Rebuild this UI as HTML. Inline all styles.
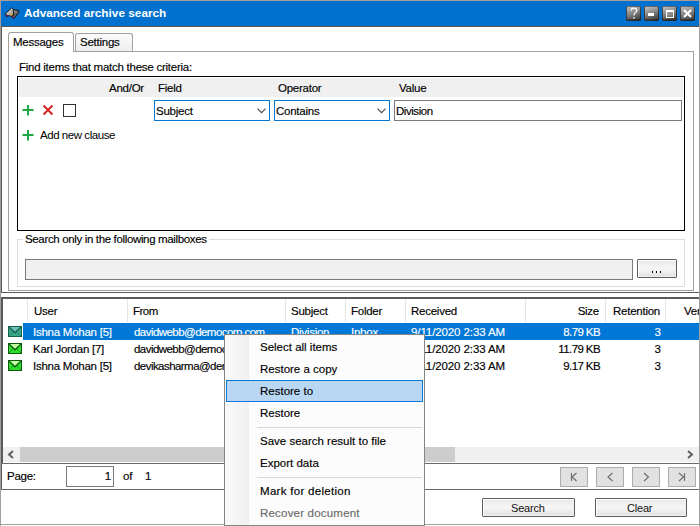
<!DOCTYPE html>
<html><head><meta charset="utf-8">
<style>
*{margin:0;padding:0;box-sizing:border-box}
html,body{width:700px;height:526px;overflow:hidden;background:#fff}
body{position:relative;font-family:"Liberation Sans",sans-serif;font-size:11px;color:#000}
.a{position:absolute}
.t{position:absolute;white-space:nowrap;line-height:11px;font-size:11.5px;letter-spacing:-0.25px;-webkit-text-stroke:0.15px currentColor}
.m{position:absolute;white-space:nowrap;line-height:12px;font-size:11.5px;-webkit-text-stroke:0.15px currentColor}
</style></head><body>
<!-- window frame -->
<div class="a" style="left:0;top:0;width:700px;height:526px;border:1px solid #a0a0a0;border-top-color:#a89c94;border-bottom:none"></div>
<!-- title bar -->
<div class="a" style="left:0;top:0;width:1px;height:27px;background:#a89c94"></div>
<div class="a" style="left:699px;top:0;width:1px;height:27px;background:#a89c94"></div>
<div class="a" style="left:1px;top:1px;width:698px;height:25px;background:#0071ce"></div>
<div class="a" style="left:1px;top:26px;width:698px;height:1px;background:#5e564f"></div>
<div class="t" style="left:24px;top:7px;font-weight:bold;font-size:11.8px;letter-spacing:0;-webkit-text-stroke:0;line-height:12px;color:#fff">Advanced archive search</div>
<!-- binoculars -->
<svg class="a" style="left:0;top:0" width="24" height="24" viewBox="0 0 24 24">
 <defs><linearGradient id="bg1" x1="0" y1="0" x2="1" y2="1"><stop offset="0" stop-color="#f0f0f0"/><stop offset="0.7" stop-color="#a8a8a8"/><stop offset="1" stop-color="#707070"/></linearGradient>
 <linearGradient id="bg2" x1="0" y1="0" x2="1" y2="1"><stop offset="0" stop-color="#b8b8b8"/><stop offset="0.5" stop-color="#6a6a6a"/><stop offset="1" stop-color="#202020"/></linearGradient></defs>
 <path d="M5 14.2 L11.6 8 L13.6 9.6 L13.8 15 L11.6 16.6 L9.4 15.6 L6.4 16.6 Z" fill="url(#bg1)" stroke="#1e1610" stroke-width="1"/>
 <path d="M13.2 9.8 L18.8 10.4 L18.6 12.6 L15.2 17 L13.6 18.6 L11.6 16.6 L13.8 15 Z" fill="url(#bg2)" stroke="#1e1610" stroke-width="1"/>
 <path d="M5.6 14.8 L8.6 16.2" stroke="#4a2a60" stroke-width="1.5"/>
 <path d="M11.2 16.4 L14 18" stroke="#4a2a60" stroke-width="1.5"/>
 <rect x="10" y="13.6" width="2.2" height="1.6" rx="0.6" fill="#f5a000"/>
</svg>
<!-- title buttons -->
<div class="a tb" style="left:626px;top:6px"></div>
<div class="a tb" style="left:644px;top:6px"></div>
<div class="a tb" style="left:662px;top:6px"></div>
<div class="a tb" style="left:680px;top:6px"></div>
<style>.tb{width:15px;height:15px;border-radius:2px;background:linear-gradient(160deg,#c8c8c8 0%,#999 35%,#5c5c5c 70%,#2e2e2e 100%);box-shadow:inset 0 0 0 1px rgba(30,30,30,.5),inset 0 -1px 0 1px rgba(20,20,20,.35)}</style>
<svg class="a" style="left:629px;top:7px" width="10" height="13"><path d="M2.2 3.6 Q2.2 1.2 5 1.2 Q7.8 1.2 7.8 3.6 Q7.8 5 6 6 Q5 6.6 5 8.6" stroke="#fff" stroke-width="1.25" fill="none"/><rect x="4.3" y="10" width="1.4" height="1.6" fill="#fff"/></svg>
<div class="a" style="left:648px;top:13px;width:6px;height:3px;background:#fff"></div>
<div class="a" style="left:666px;top:10px;width:8px;height:8px;border:1px solid #fff;border-top-width:2px;background:rgba(255,255,255,.15)"></div>
<svg class="a" style="left:683px;top:9px" width="9" height="9"><path d="M1 1L8 8M8 1L1 8" stroke="#fff" stroke-width="2.2"/></svg>

<!-- outer top frame -->
<div class="a" style="left:1px;top:27px;width:698px;height:266px;border-left:1px solid #5a5a5a;border-bottom:1px solid #5a5a5a"></div>
<!-- tab panel -->
<div class="a" style="left:8px;top:51px;width:686px;height:240px;border:1px solid #a0a0a0"></div>
<!-- tabs -->
<div class="a" style="left:75px;top:33px;width:58px;height:18px;border:1px solid #a0a0a0;border-bottom:none;border-radius:3px 3px 0 0;background:linear-gradient(#fbfbfb,#eeeeee)"></div>
<div class="a" style="left:8px;top:32px;width:66px;height:20px;border:1px solid #a0a0a0;border-bottom:none;border-radius:3px 3px 0 0;background:#fff"></div>
<div class="t" style="left:13px;top:37px">Messages</div>
<div class="t" style="left:80px;top:37px">Settings</div>

<div class="t" style="left:19px;top:62px">Find items that match these criteria:</div>
<!-- grid -->
<div class="a" style="left:17px;top:76px;width:668px;height:155px;border:1px solid #000"></div>
<div class="a" style="left:19px;top:78px;width:664px;height:19px;background:#f0f0f0"></div>
<div class="t" style="left:109px;top:83px">And/Or</div>
<div class="t" style="left:158px;top:83px">Field</div>
<div class="t" style="left:278px;top:83px">Operator</div>
<div class="t" style="left:399px;top:83px">Value</div>

<svg class="a" style="left:22px;top:105px" width="12" height="11"><rect x="5" y="0" width="2" height="10.5" fill="#1ea844"/><rect x="0.5" y="4" width="11" height="2" fill="#1ea844"/></svg>
<svg class="a" style="left:42px;top:104px" width="12" height="12"><path d="M1.5 1.5L10.5 10.5M10.5 1.5L1.5 10.5" stroke="#d42020" stroke-width="1.9"/></svg>
<div class="a" style="left:63px;top:104px;width:13px;height:13px;border:1px solid #333;background:#fff"></div>

<div class="a" style="left:154px;top:100px;width:116px;height:21px;border:1px solid #0078d7;background:#fff"></div>
<svg class="a" style="left:257px;top:108px" width="10" height="7"><path d="M0.5 0.6L4.5 4.6L8.5 0.6" stroke="#4a4a4a" stroke-width="1.1" fill="none"/></svg>
<div class="t" style="left:156px;top:106px">Subject</div>
<div class="a" style="left:274px;top:100px;width:116px;height:21px;border:1px solid #0078d7;background:#fff"></div>
<svg class="a" style="left:377px;top:108px" width="10" height="7"><path d="M0.5 0.6L4.5 4.6L8.5 0.6" stroke="#4a4a4a" stroke-width="1.1" fill="none"/></svg>
<div class="t" style="left:276px;top:106px">Contains</div>
<div class="a" style="left:394px;top:100px;width:288px;height:21px;border:1px solid #7a7a7a;background:#fff"></div>
<div class="t" style="left:396px;top:106px;letter-spacing:-0.45px">Division</div>

<svg class="a" style="left:22px;top:130px" width="12" height="11"><rect x="5" y="0" width="2" height="10.5" fill="#1ea844"/><rect x="0.5" y="4" width="11" height="2" fill="#1ea844"/></svg>
<div class="t" style="left:40px;top:130px;letter-spacing:-0.45px;-webkit-text-stroke:0;color:#000">Add new clause</div>

<!-- group box -->
<div class="a" style="left:17px;top:239px;width:668px;height:48px;border:1px solid #dcdcdc"></div>
<div class="a" style="left:23px;top:233px;width:186px;height:12px;background:#fff"></div>
<div class="t" style="left:25px;top:234px;letter-spacing:-0.35px">Search only in the following mailboxes</div>
<div class="a" style="left:25px;top:259px;width:608px;height:21px;border:1px solid #7a7a7a;background:#f0f0f0"></div>
<div class="a btn" style="left:637px;top:259px;width:40px;height:19px"></div>
<style>.btn{border:1px solid #5e5e5e;border-radius:1px;background:linear-gradient(#e6e6e6,#f6f6f6 45%,#f3f3f3 60%,#e0e0e0);box-shadow:inset 1px 1px 0 #fff,inset -1px -1px 0 #efefef}</style>
<div class="a" style="left:652px;top:271px;width:1px;height:2px;background:#000"></div>
<div class="a" style="left:656px;top:271px;width:1px;height:2px;background:#000"></div>
<div class="a" style="left:660px;top:271px;width:1px;height:2px;background:#000"></div>

<!-- list view -->
<div class="a" style="left:1px;top:297px;width:698px;height:2px;background:#5a5a5a"></div>
<div class="a" style="left:1px;top:297px;width:2px;height:166px;background:#5a5a5a"></div>
<div class="a" style="left:1px;top:463px;width:1px;height:27px;background:#5a5a5a"></div>
<!-- header -->
<div class="a" style="left:27px;top:299px;width:1px;height:23px;background:#e5e5e5"></div>
<div class="a" style="left:127px;top:299px;width:1px;height:23px;background:#e5e5e5"></div>
<div class="a" style="left:285px;top:299px;width:1px;height:23px;background:#e5e5e5"></div>
<div class="a" style="left:345px;top:299px;width:1px;height:23px;background:#e5e5e5"></div>
<div class="a" style="left:405px;top:299px;width:1px;height:23px;background:#e5e5e5"></div>
<div class="a" style="left:525px;top:299px;width:1px;height:23px;background:#e5e5e5"></div>
<div class="a" style="left:605px;top:299px;width:1px;height:23px;background:#e5e5e5"></div>
<div class="a" style="left:665px;top:299px;width:1px;height:23px;background:#e5e5e5"></div>
<div class="t" style="left:34px;top:306px">User</div>
<div class="t" style="left:133px;top:306px;letter-spacing:-0.5px">From</div>
<div class="t" style="left:291px;top:306px">Subject</div>
<div class="t" style="left:351px;top:306px">Folder</div>
<div class="t" style="left:411px;top:306px">Received</div>
<div class="t" style="left:540px;top:306px;width:59px;text-align:right">Size</div>
<div class="t" style="left:613px;top:306px">Retention</div>
<div class="t" style="left:684px;top:306px">Ver</div>

<!-- rows -->
<div class="a" style="left:23px;top:323px;width:676px;height:17px;background:#0078d7"></div>
<div class="t" style="left:33px;top:327px;color:#fff">Ishna Mohan [5]</div>
<div class="t" style="left:134px;top:327px;letter-spacing:-0.55px;color:#fff">davidwebb@democorp.com</div>
<div class="t" style="left:291px;top:327px;color:#fff">Division</div>
<div class="t" style="left:351px;top:327px;color:#fff">Inbox</div>
<div class="t" style="left:411px;top:327px;letter-spacing:-0.1px;color:#fff">9/11/2020 2:33 AM</div>
<div class="t" style="left:540px;top:327px;width:60px;text-align:right;letter-spacing:-0.6px;color:#fff">8.79 KB</div>
<div class="t" style="left:601px;top:327px;width:60px;letter-spacing:0;text-align:right;color:#fff">3</div>

<div class="t" style="left:33px;top:344px">Karl Jordan [7]</div>
<div class="t" style="left:134px;top:344px;letter-spacing:-0.55px">davidwebb@democorp.com</div>
<div class="t" style="left:411px;top:344px;letter-spacing:-0.1px">9/11/2020 2:33 AM</div>
<div class="t" style="left:540px;top:344px;width:60px;text-align:right;letter-spacing:-0.6px">11.79 KB</div>
<div class="t" style="left:601px;top:344px;width:60px;letter-spacing:0;text-align:right">3</div>

<div class="t" style="left:33px;top:361px">Ishna Mohan [5]</div>
<div class="t" style="left:134px;top:361px;letter-spacing:-0.55px">devikasharma@democorp.com</div>
<div class="t" style="left:411px;top:361px;letter-spacing:-0.1px">9/11/2020 2:33 AM</div>
<div class="t" style="left:540px;top:361px;width:60px;text-align:right;letter-spacing:-0.6px">9.17 KB</div>
<div class="t" style="left:601px;top:361px;width:60px;letter-spacing:0;text-align:right">3</div>

<!-- envelopes -->
<svg class="a" style="left:8px;top:326px" width="14" height="11"><rect x="0.5" y="0.5" width="13" height="10" fill="#3aa888" stroke="#17604a"/><path d="M1 1L13 1L7 6.5Z" fill="#6cc0b8"/><path d="M1 10L5.5 5.5M13 10L8.5 5.5" stroke="#2a8a6a" fill="none"/><path d="M1 1L7 6.8L13 1" stroke="#17604a" stroke-width="1.2" fill="none"/></svg>
<svg class="a" style="left:8px;top:343px" width="14" height="11"><rect x="0.5" y="0.5" width="13" height="10" fill="#2ee02e" stroke="#0a5a0a"/><path d="M1 1L13 1L7 6.5Z" fill="#c0ffa0"/><path d="M1 10L5.5 5.5M13 10L8.5 5.5" stroke="#20a020" fill="none"/><path d="M1 1L7 6.8L13 1" stroke="#0a5a0a" stroke-width="1.2" fill="none"/></svg>
<svg class="a" style="left:8px;top:360px" width="14" height="11"><rect x="0.5" y="0.5" width="13" height="10" fill="#2ee02e" stroke="#0a5a0a"/><path d="M1 1L13 1L7 6.5Z" fill="#c0ffa0"/><path d="M1 10L5.5 5.5M13 10L8.5 5.5" stroke="#20a020" fill="none"/><path d="M1 1L7 6.8L13 1" stroke="#0a5a0a" stroke-width="1.2" fill="none"/></svg>

<!-- scrollbar -->
<div class="a" style="left:3px;top:447px;width:696px;height:15px;background:#f0f0f0"></div>
<div class="a" style="left:20px;top:447px;width:435px;height:15px;background:#cdcdcd"></div>
<svg class="a" style="left:7px;top:450px" width="8" height="9"><path d="M6 1L2 4.5L6 8" stroke="#606060" stroke-width="2" fill="none"/></svg>
<svg class="a" style="left:686px;top:450px" width="8" height="9"><path d="M2 1L6 4.5L2 8" stroke="#606060" stroke-width="2" fill="none"/></svg>

<!-- page bar -->
<div class="a" style="left:1px;top:463px;width:698px;height:27px;border-top:1px solid #696969;border-bottom:1px solid #696969"></div>
<div class="t" style="left:7px;top:471px">Page:</div>
<div class="a" style="left:66px;top:466px;width:48px;height:21px;border:1px solid #7a7a7a;background:#fff"></div>
<div class="t" style="left:70px;top:471px;width:41px;text-align:right">1</div>
<div class="t" style="left:123px;top:471px">of</div>
<div class="t" style="left:145px;top:471px">1</div>
<div class="a nb" style="left:560px;top:467px"></div>
<div class="a nb" style="left:596px;top:467px"></div>
<div class="a nb" style="left:632px;top:467px"></div>
<div class="a nb" style="left:668px;top:467px"></div>
<svg class="a" style="left:560px;top:467px" width="140" height="20">
 <g stroke="#707070" stroke-width="1.2" fill="none">
 <path d="M11.5 6V14M16.5 6L12 10L16.5 14"/>
 <path d="M52.5 6L48 10L52.5 14"/>
 <path d="M84 6L88.5 10L84 14"/>
 <path d="M119 6L123.5 10L119 14M124.5 6V14"/>
 </g></svg>
<style>.nb{width:28px;height:20px;background:#e1e1e1;border:1px solid #adadad}</style>

<!-- bottom buttons -->
<div class="a btn" style="left:482px;top:498px;width:93px;height:19px"></div>
<div class="t" style="left:511px;top:503px;font-size:11px;letter-spacing:-0.2px;-webkit-text-stroke:0;color:#111">Search</div>
<div class="a btn" style="left:595px;top:498px;width:92px;height:19px"></div>
<div class="t" style="left:627px;top:503px;font-size:11px;letter-spacing:-0.2px;-webkit-text-stroke:0;color:#111">Clear</div>
<div class="a" style="left:0;top:524px;width:700px;height:1px;background:#a0a0a0"></div>
<div class="a" style="left:699px;top:297px;width:1px;height:229px;background:#a0a0a0"></div>

<!-- context menu -->
<div class="a" style="left:224px;top:334px;width:201px;height:192px;border:1px solid #858585;background:#fcfcfc"></div>
<div class="a" style="left:225px;top:335px;width:24px;height:190px;background:linear-gradient(90deg,#fafafa,#f0f0f0)"></div>
<div class="a" style="left:226px;top:380px;width:197px;height:22px;border:1px solid #0a78d6;background:#b9d7f2"></div>
<div class="m" style="left:260px;top:341px">Select all items</div>
<div class="m" style="left:260px;top:363px">Restore a copy</div>
<div class="m" style="left:260px;top:385px">Restore to</div>
<div class="m" style="left:260px;top:407px">Restore</div>
<div class="a" style="left:257px;top:427px;width:165px;height:1px;background:#d7d7d7"></div>
<div class="m" style="left:260px;top:435px">Save search result to file</div>
<div class="m" style="left:260px;top:457px">Export data</div>
<div class="a" style="left:257px;top:477px;width:165px;height:1px;background:#d7d7d7"></div>
<div class="m" style="left:260px;top:485px;letter-spacing:0.3px">Mark for deletion</div>
<div class="m" style="left:260px;top:507px;letter-spacing:0.2px;color:#6a6a6a">Recover document</div>
</body></html>
